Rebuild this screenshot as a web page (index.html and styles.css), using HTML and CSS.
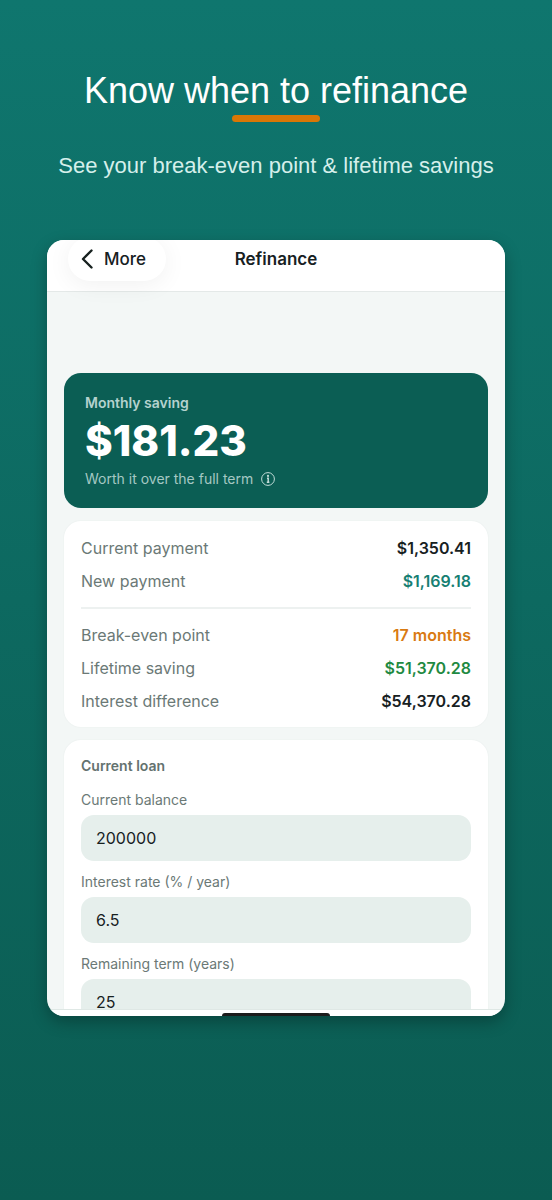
FILE: index.html
```html
<!doctype html>
<html lang="en">
<head>
  <meta charset="utf-8" />
  <meta name="viewport" content="width=device-width,initial-scale=1" />
  <title>Refinance</title>
  <link rel="stylesheet" href="styles.css">
</head>
<body>
  <div class="page">
    <header class="intro">
      <h1>Know when to refinance</h1>
      <div class="accent"></div>
      <p>See your break-even point &amp; lifetime savings</p>
    </header>

    <main class="phone">
      <nav class="topbar">
        <button class="back" type="button">
          <svg width="14" height="22" viewBox="0 0 14 22" aria-hidden="true"><path d="M11.500 2.500 3 11l8.500 8.500" fill="none" stroke="currentColor" stroke-width="2.400" stroke-linecap="round" stroke-linejoin="round"/></svg>
          More
        </button>
        <h2>Refinance</h2>
      </nav>

      <div class="content">
        <section class="hero">
          <div class="hero-label">Monthly saving</div>
          <div class="amount">$181.23</div>
          <div class="hero-note">
            Worth it over the full term
            <button class="info" type="button" aria-label="More info">
              <svg width="14" height="14" viewBox="0 0 14 14" aria-hidden="true"><circle cx="7" cy="7" r="6.400" fill="none" stroke="currentColor"/><circle cx="7" cy="3.900" r="1.100" fill="currentColor"/><path d="M6 6.200h1.200v4M5.800 10.200h2.600" fill="none" stroke="currentColor" stroke-width="1.500"/></svg>
            </button>
          </div>
        </section>

        <section class="card">
          <dl class="stats">
            <div><dt>Current payment</dt><dd>$1,350.41</dd></div>
            <div><dt>New payment</dt><dd class="teal">$1,169.18</dd></div>
          </dl>
          <hr>
          <dl class="stats">
            <div><dt>Break-even point</dt><dd class="orange">17 months</dd></div>
            <div><dt>Lifetime saving</dt><dd class="green">$51,370.28</dd></div>
            <div><dt>Interest difference</dt><dd>$54,370.28</dd></div>
          </dl>
        </section>

        <form class="card loan">
          <h3>Current loan</h3>
          <div class="field">
            <label for="balance">Current balance</label>
            <input id="balance" type="text" inputmode="decimal" value="200000">
          </div>
          <div class="field">
            <label for="rate">Interest rate (% / year)</label>
            <input id="rate" type="text" inputmode="decimal" value="6.5">
          </div>
          <div class="field">
            <label for="term">Remaining term (years)</label>
            <input id="term" type="text" inputmode="numeric" value="25">
          </div>
        </form>
      </div>

      <div class="bottombar"><div class="home"></div></div>
    </main>
  </div>
</body>
</html>
```
FILE: styles.css
```css
*{ box-sizing:border-box; }
body{ margin:0; font-family:Inter,"Liberation Sans",sans-serif; color:#17211f; }
h1,h2,h3,p,dl,dd{ margin:0; }
button{ border:0; padding:0; background:none; font:inherit; color:inherit; }

.page{
  height:100vh; padding:69px 47px 184px;
  display:flex; flex-direction:column;
  background:linear-gradient(#0f766e,#0b5c52);
}

.intro{ text-align:center; color:#fff; font-family:"Liberation Sans",Arial,sans-serif; margin-bottom:61px; }
.intro h1{ font-size:36px; line-height:44px; font-weight:400; }
.accent{ width:88px; height:7px; border-radius:4px; background:#d97706; margin:2px auto 31px; }
.intro p{ font-size:22px; line-height:26px; color:#d5efeb; }

.phone{
  flex:1; min-height:0; overflow:hidden;
  display:flex; flex-direction:column;
  border-radius:17px; background:#f3f7f6;
  box-shadow:0 6px 16px rgba(0,0,0,.28);
}

/* the back pill is taller than the bar and runs off its top edge */
.topbar{
  flex:none; position:relative; z-index:1;
  display:grid; grid-template-columns:1fr auto 1fr; align-items:center; align-content:end;
  height:52px; padding:0 21px 10px;
  background:#fff; border-bottom:1px solid #e4e9e8;
}
.back{
  justify-self:start; display:flex; align-items:center; gap:10px;
  height:44px; padding:0 20px 0 12px; border-radius:22px;
  font-size:17px; font-weight:500; background:#fff;
  box-shadow:0 4px 24px rgba(0,0,0,.06);
}
.topbar h2{ font-size:17px; line-height:22px; font-weight:600; }

.content{
  flex:1; min-height:0; overflow:hidden;
  display:flex; flex-direction:column; gap:13px;
  padding:81px 17px 0;
}
.content > *{ flex:none; }

.hero{ padding:20px 21px; border-radius:17px; background:#0b5e54; color:#fff; }
.hero-label{ font-size:14px; line-height:19px; font-weight:600; color:#b4d2ce; }
.amount{ font-size:42px; line-height:50px; font-weight:800; margin:4px 0 3px; }
.hero-note{ display:flex; align-items:center; gap:8px; font-size:14px; line-height:19px; color:#a5c8c3; }
.info{ display:flex; color:#c2dcd8; }

.card{ background:#fff; border-radius:17px; padding:16px 17px 15px; box-shadow:0 0 2px rgba(20,60,50,.06); }
.stats{ display:flex; flex-direction:column; gap:11px; }
.stats div{ display:flex; justify-content:space-between; font-size:16px; line-height:22px; }
.stats dt{ color:#6b7976; }
.stats dd{ font-weight:600; }
.stats .teal{ color:#178073; }
.stats .orange{ color:#d97a12; }
.stats .green{ color:#1f8a42; }
hr{ border:0; height:2px; background:#edf1f0; margin:15px 0; }

.loan{ display:flex; flex-direction:column; gap:12px; }
.loan h3{ font-size:14px; line-height:20px; font-weight:600; color:#64726f; margin-bottom:3px; }
.field{ display:flex; flex-direction:column; gap:6px; }
.field label{ font-size:14px; line-height:18px; color:#6b7976; }
.field input{
  width:100%; height:46px; padding:0 15px; border:0; border-radius:13px;
  background:#e6efec; font:16px Inter,sans-serif; color:#17211f;
}

.bottombar{ flex:none; display:flex; align-items:flex-end; justify-content:center; height:7px; background:#fff; border-top:1px solid #dfe8e5; }
.home{ width:108px; height:3px; border-radius:3px 3px 0 0; background:#1c1c1c; }
```
